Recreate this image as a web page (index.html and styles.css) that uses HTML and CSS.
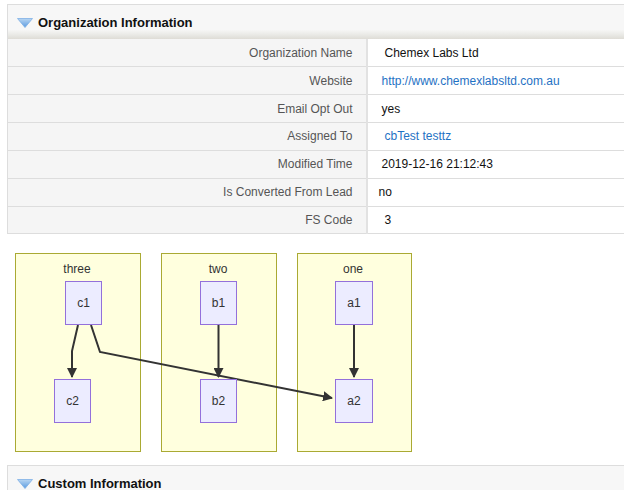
FILE: index.html
```html
<!DOCTYPE html>
<html>
<head>
<meta charset="utf-8">
<link rel="stylesheet" href="styles.css">
</head>
<body>
<div class="page">
  <div class="block-header">
    <svg class="tri" width="16" height="10" viewBox="0 0 16 10">
      <defs>
        <linearGradient id="tg" x1="0" y1="0" x2="0" y2="1">
          <stop offset="0" stop-color="#b9d6f2"/>
          <stop offset="1" stop-color="#5b9be0"/>
        </linearGradient>
      </defs>
      <polygon points="0.5,0.5 15.5,0.5 8,9.5" fill="url(#tg)" stroke="#7fb0e6" stroke-width="0.8"/>
    </svg>
    <span class="block-title">Organization Information</span>
  </div>
  <table class="detail">
    <tr><td class="lbl">Organization Name</td><td class="val p6">Chemex Labs Ltd</td></tr>
    <tr><td class="lbl">Website</td><td class="val"><a href="#">http://www.chemexlabsltd.com.au</a></td></tr>
    <tr><td class="lbl">Email Opt Out</td><td class="val">yes</td></tr>
    <tr><td class="lbl">Assigned To</td><td class="val p6"><a href="#">cbTest testtz</a></td></tr>
    <tr><td class="lbl">Modified Time</td><td class="val">2019-12-16 21:12:43</td></tr>
    <tr><td class="lbl">Is Converted From Lead</td><td class="val p0">no</td></tr>
    <tr><td class="lbl">FS Code</td><td class="val p6">3</td></tr>
  </table>

  <div class="diagram">
    <svg width="430" height="212" viewBox="0 240 430 212" class="mer">
      <defs>
        <marker id="ah" viewBox="0 0 10 10" refX="9" refY="5" markerWidth="5" markerHeight="5" orient="auto" markerUnits="strokeWidth">
          <path d="M0,0 L10,5 L0,10 z" fill="#333"/>
        </marker>
      </defs>
      <rect class="cl" x="15.5" y="253.5" width="125" height="198"/>
      <rect class="cl" x="161.5" y="253.5" width="115" height="198"/>
      <rect class="cl" x="297.5" y="253.5" width="114" height="198"/>
      <text class="ct" x="77" y="273">three</text>
      <text class="ct" x="218" y="273">two</text>
      <text class="ct" x="353" y="273">one</text>

      <path class="ed" d="M78,325 L72,351 L72,377" marker-end="url(#ah)"/>
      <path class="ed" d="M91,325 L100,352 L332,398" marker-end="url(#ah)"/>
      <path class="ed" d="M218.5,325 L218.5,377" marker-end="url(#ah)"/>
      <path class="ed" d="M354,325 L354,377" marker-end="url(#ah)"/>

      <rect class="nd" x="65.5" y="281.5" width="36" height="43"/>
      <rect class="nd" x="54.5" y="379.5" width="36" height="43"/>
      <rect class="nd" x="200.5" y="281.5" width="36" height="43"/>
      <rect class="nd" x="200.5" y="379.5" width="36" height="43"/>
      <rect class="nd" x="335.5" y="281.5" width="37" height="43"/>
      <rect class="nd" x="335.5" y="379.5" width="37" height="43"/>
      <text class="nt" x="83.5" y="307">c1</text>
      <text class="nt" x="72.5" y="405">c2</text>
      <text class="nt" x="218.5" y="307">b1</text>
      <text class="nt" x="218.5" y="405">b2</text>
      <text class="nt" x="354" y="307">a1</text>
      <text class="nt" x="354" y="405">a2</text>
    </svg>
  </div>

  <div class="block-header second">
    <svg class="tri" width="16" height="10" viewBox="0 0 16 10">
      <defs>
        <linearGradient id="tg2" x1="0" y1="0" x2="0" y2="1">
          <stop offset="0" stop-color="#b9d6f2"/>
          <stop offset="1" stop-color="#5b9be0"/>
        </linearGradient>
      </defs>
      <polygon points="0.5,0.5 15.5,0.5 8,9.5" fill="url(#tg2)" stroke="#7fb0e6" stroke-width="0.8"/>
    </svg>
    <span class="block-title">Custom Information</span>
  </div>
</div>
</body>
</html>
```
FILE: styles.css
```css
html, body {
  margin: 0;
  padding: 0;
  background: #fff;
  overflow: hidden;
}
body {
  font-family: "Liberation Sans", Arial, sans-serif;
  font-size: 12px;
  color: #222;
}
.page {
  padding: 4px 0 0 7px;
  width: 617px;
}
.block-header {
  height: 35px;
  border-top: 1px solid #ddd;
  border-left: 1px solid #ddd;
  background: linear-gradient(to bottom, #f7f7f7 0%, #f7f7f7 72%, #e9e9e5 88%, #dedcd6 100%);
  display: flex;
  align-items: center;
  padding-left: 9px;
  box-sizing: border-box;
}
.tri {
  display: block;
  margin-right: 5px;
  margin-top: 1px;
}
.block-title {
  font-weight: bold;
  font-size: 13px;
  color: #111;
}
.detail {
  border-collapse: collapse;
  width: 617px;
  border-left: 1px solid #ddd;
}
.detail tr {
  height: 27.85px;
  border-bottom: 1px solid #ddd;
}
.detail td {
  padding: 0;
  vertical-align: middle;
}
.lbl {
  width: 359px;
  background: #f5f5f5;
  text-align: right;
  color: #555;
  padding-right: 13px !important;
  box-sizing: border-box;
  border-right: 2px solid #e2e2e2;
}
.val {
  background: #fff;
  color: #111;
  padding-left: 14px !important;
}
.val.p6 { padding-left: 17px !important; }
.val.p0 { padding-left: 11px !important; }
.val a {
  color: #1f72c4;
  text-decoration: none;
}
.diagram {
  margin-left: -7px;
  margin-top: 6px;
}
.mer {
  display: block;
}
.cl {
  fill: #ffffde;
  stroke: #aaaa33;
  stroke-width: 1;
}
.nd {
  fill: #ececff;
  stroke: #9370db;
  stroke-width: 1;
}
.ed {
  fill: none;
  stroke: #333;
  stroke-width: 2;
}
.ct, .nt {
  font-family: "Liberation Sans", Arial, sans-serif;
  font-size: 12px;
  fill: #333;
  text-anchor: middle;
}
.second {
  margin-top: 13px;
}
```
